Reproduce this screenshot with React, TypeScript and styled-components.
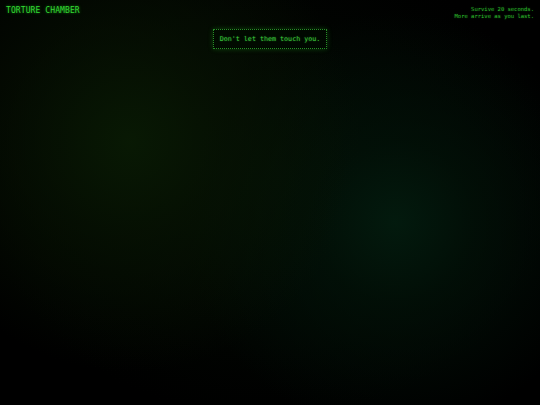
import styled, { createGlobalStyle } from "styled-components";

const GlobalStyle = createGlobalStyle`
  html, body {
    margin: 0;
    padding: 0;
    background: #000;
  }
`;

const Chamber = styled.div`
  position: relative;
  width: 540px;
  height: 405px;
  overflow: hidden;
  font-family: "DejaVu Sans Mono", "Liberation Mono", monospace;
  color: #2fd42f;
  background:
    radial-gradient(circle at 130px 142px, rgba(9, 27, 4, 0.9) 0, rgba(7, 20, 3, 0.7) 90px, rgba(0, 0, 0, 0) 230px),
    radial-gradient(circle at 395px 222px, rgba(3, 28, 15, 0.9) 0, rgba(2, 19, 9, 0.7) 80px, rgba(0, 0, 0, 0) 210px),
    radial-gradient(ellipse at 50% 45%, #030b03 0, #000 75%);
  display: flex;
  flex-direction: column;
  align-items: center;
`;

const Hud = styled.header`
  align-self: stretch;
  display: flex;
  justify-content: space-between;
  align-items: flex-start;
  padding: 5px 6px 0 6px;
`;

const Title = styled.h1`
  margin: 1px 0 0;
  font-size: 8px;
  line-height: 10px;
  font-weight: normal;
  letter-spacing: 0.1px;
  color: #33d933;
  text-shadow: 0 0 3px rgba(40, 220, 40, 0.6);
`;

const Notes = styled.div`
  margin-top: 0.5px;
  text-align: right;
  font-size: 5.5px;
  line-height: 7px;
  color: #2cb82c;
  text-shadow: 0 0 2px rgba(40, 200, 40, 0.4);
`;

const Warning = styled.div`
  margin-top: 9px;
  padding: 0 6px;
  height: 18px;
  display: flex;
  align-items: center;
  border: 1px dotted #268f26;
  background: rgba(0, 10, 0, 0.6);
  box-shadow: 0 0 5px rgba(40, 200, 40, 0.3);
  font-size: 6.7px;
  color: #3cc83c;
  text-shadow: 0 0 2px rgba(60, 220, 60, 0.5);
  white-space: pre;
`;

export default function App() {
  return (
    <>
      <GlobalStyle />
      <Chamber>
        <Hud>
          <Title>TORTURE CHAMBER</Title>
          <Notes>
            Survive 20 seconds.
            <br />
            More arrive as you last.
          </Notes>
        </Hud>
        <Warning>Don't let them touch you.</Warning>
      </Chamber>
    </>
  );
}
